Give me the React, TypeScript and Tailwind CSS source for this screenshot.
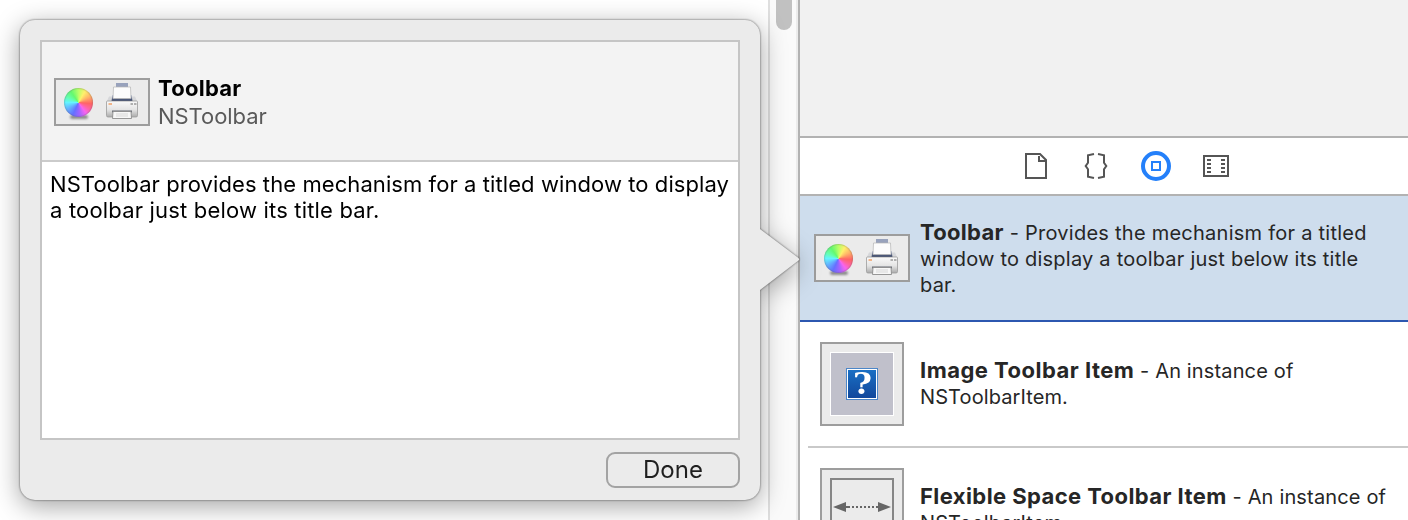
import type { ReactNode } from 'react';

function ColorWheel() {
  return (
    <div className="relative size-[30px] shrink-0">
      <div className="absolute inset-x-1.5 -bottom-px h-1 rounded-full bg-black/40 blur-[1.2px]" />
      <div className="absolute inset-x-[0.5px] top-0 bottom-px rounded-full bg-[conic-gradient(from_0deg,#b8ff68,#fff06c_30deg,#ffb868_60deg,#ff6464_95deg,#ff64a0_120deg,#f864f0_145deg,#a064ff_175deg,#6470ff_205deg,#64b4ff_240deg,#64f4ff_270deg,#64ffb0_295deg,#64f870_325deg,#b8ff68_360deg)] shadow-[inset_0_0_1px_1px_rgba(90,90,90,0.25)]" />
    </div>
  );
}

function Printer() {
  return (
    <svg className="h-[38px] w-[34px] shrink-0" viewBox="0 0 34 38">
      <defs>
        <linearGradient id="body" x1="0" y1="0" x2="0" y2="1">
          <stop offset="0" stopColor="#fafafa" />
          <stop offset="0.55" stopColor="#e4e4e4" />
          <stop offset="1" stopColor="#aaaaaa" />
        </linearGradient>
        <linearGradient id="slot" x1="0" y1="0" x2="0" y2="1">
          <stop offset="0" stopColor="#a8b2cc" />
          <stop offset="1" stopColor="#2c3856" />
        </linearGradient>
      </defs>
      <path d="M11 1h12v5H11z" fill="#98a2bc" />
      <path d="M4 14.500L1.500 20h31L30 14.500z" fill="#d6d7da" />
      <path d="M7.500 13h19l1 6h-21z" fill="url(#slot)" />
      <path d="M8.500 5h17l.5 11.500H8z" fill="#fcfcfc" stroke="#b4b4b4" strokeWidth="0.700" />
      <path d="M1.500 20q0-1 1-1H31.500q1 0 1 1V33.500q0 1.500-1.500 1.500H3q-1.500 0-1.500-1.500z" fill="url(#body)" stroke="#9c9c9c" strokeWidth="0.800" />
      <path d="M7 17.800h20" stroke="#4c5878" strokeWidth="1.600" />
      <path d="M3.500 22h3.500" stroke="#f0a068" strokeWidth="1.500" />
      <path d="M25.500 22h2.500m1 0h2.500" stroke="#999" strokeWidth="1.400" />
      <path d="M7 28.500h20v2H7z" fill="#6b6f78" />
      <path d="M8 29.500h18l.5 7h-19z" fill="#f7f7f7" stroke="#8c8c8c" strokeWidth="0.900" />
      <path d="M11 32h12M11 34h12" stroke="#cacaca" strokeWidth="0.700" />
    </svg>
  );
}

function ToolbarThumb() {
  return (
    <div className="flex h-12 w-24 shrink-0 border-2 border-[#9d9d9d] bg-[#ebebeb] pl-[7.5px]">
      <div className="pt-2">
        <ColorWheel />
      </div>
      <div className="ml-[11.5px] pt-[2px]">
        <Printer />
      </div>
    </div>
  );
}

function ImageItemThumb() {
  return (
    <div className="size-[84px] border-2 border-[#9d9d9d] bg-[#ebebeb] p-2">
      <div className="flex size-full items-center justify-center border border-white bg-[#c0c0cb]">
        <div className="size-8 border border-[#4c86c8]">
          <div className="flex size-full items-center justify-center border border-white bg-linear-to-b from-[#1a6fc4] to-[#12489c] font-['DejaVu_Serif',serif] text-[29px] leading-none font-bold text-white">
            <span className="scale-x-[1.12]">?</span>
          </div>
        </div>
      </div>
    </div>
  );
}

function FlexibleSpaceThumb() {
  return (
    <div className="size-[84px] border-2 border-[#9d9d9d] bg-[#ebebeb] p-2">
      <div className="size-full border-2 border-[#868686]">
        <svg className="h-[60px] w-[60px]" viewBox="0 0 60 60" fill="#666">
          <path d="M1 27l13-5v10zM59 27l-13-5v10z" />
          <path d="M14 27h4m2 0h2m2 0h2m2 0h2m2 0h2m2 0h2m2 0h2m2 0h4" stroke="#666" strokeWidth="2" />
        </svg>
      </div>
    </div>
  );
}

function LibraryTabs() {
  return (
    <div className="flex h-[60px] shrink-0 items-center gap-[30px] border-y-2 border-[#b2b2b2] bg-white pl-[221px]">
      <svg className="size-[30px]" viewBox="0 0 30 30" fill="none" stroke="#555" strokeWidth="2">
        <path d="M5 3h14l6 6v18H5z" />
        <path d="M18 5v5h6" />
      </svg>
      <svg className="size-[30px]" viewBox="0 0 30 30" fill="none" stroke="#555" strokeWidth="2">
        <path d="M13 3l-6 1.200v7.500L4.700 15 7 18.300V25.800l6 1.200" />
        <path d="M17 3l6 1.200v7.500L25.300 15 23 18.300V25.800l-6 1.200" />
      </svg>
      <svg className="size-[30px]" viewBox="0 0 30 30" fill="none" stroke="#2480fa">
        <circle cx="15" cy="15" r="13" strokeWidth="4" />
        <path d="M11 11h8v8h-8z" strokeWidth="2" />
      </svg>
      <svg className="size-[30px]" viewBox="0 0 30 30" fill="none" stroke="#555" strokeWidth="2">
        <path d="M3 5h24v20H3z" />
        <path d="M6 9h4M6 13h4M6 17h4M6 21h4M20 9h4M20 13h4M20 17h4M20 21h4" />
      </svg>
    </div>
  );
}

function LibraryRow({ thumb, children }: { thumb: ReactNode; children: ReactNode }) {
  return (
    <div className="flex h-[124px] items-center pl-[14px] text-[20px] leading-[26px] text-[#262626]">
      <div className="flex w-24 shrink-0 justify-center">{thumb}</div>
      <div className="pl-[10px] whitespace-nowrap">{children}</div>
    </div>
  );
}

function Popover() {
  return (
    <div className="absolute top-5 left-5 h-[480px] w-[780px] drop-shadow-[0_6px_13px_rgba(0,0,0,0.36)]">
      <div className="h-full w-full drop-shadow-[0_0_0.8px_rgba(0,0,0,0.6)]">
        <div className="flex h-[480px] w-[740px] flex-col rounded-[15px] bg-[#ebebeb] px-5 pt-5">
          <div className="flex h-[400px] flex-col border-2 border-[#c5c5c5] bg-white">
            <div className="flex h-[120px] items-center gap-2 border-b-2 border-[#cbcbcb] bg-[#f3f3f3] pt-0.5 pl-3">
              <ToolbarThumb />
              <div className="text-[22px] leading-7">
                <div className="font-bold tracking-[0.25px] text-black">Toolbar</div>
                <div className="tracking-[-0.05px] text-[#5a5a5a]">NSToolbar</div>
              </div>
            </div>
            <div className="pt-[9px] pl-2 text-[22px] leading-[26px] whitespace-nowrap text-black">
              <div className="tracking-[0.08px]">
                NSToolbar provides the mechanism for a titled window to display
              </div>
              <div className="tracking-[0.18px]">a toolbar just below its title bar.</div>
            </div>
          </div>
          <button className="mt-3 h-9 w-[134px] self-end rounded-[9px] border-2 border-[#a3a3a3] bg-[#ebebeb] pb-px text-[24px] leading-[31px] text-[#1f1f1f]">
            Done
          </button>
        </div>
        <svg className="absolute top-[209px] left-[739px] h-[61px] w-[41px]" viewBox="0 0 41 61">
          <path d="M0 0H1L39.500 29Q41 30.500 39.500 31.500L1 61H0z" fill="#ebebeb" />
        </svg>
      </div>
    </div>
  );
}

export default function App() {
  return (
    <div className="relative flex h-[520px] w-[1408px] overflow-hidden bg-white font-['Inter','Liberation_Sans',sans-serif]">
      <div className="flex w-[800px] shrink-0 justify-end border-r-2 border-[#b2b2b2]">
        <div className="flex w-[30px] border-r-2 border-l-2 border-r-[#ececec] border-l-[#dfdfdf] bg-[#fafafa] pl-1.5">
          <div className="h-[30px] w-4 rounded-b-full bg-[#c1c1c1]" />
        </div>
      </div>
      <div className="flex min-w-0 flex-1 flex-col">
        <div className="h-[136px] shrink-0 bg-[#f1f1f1]" />
        <LibraryTabs />
        <div className="shrink-0 border-b-2 border-[#2c57b0] bg-[#cedded]">
          <LibraryRow thumb={<ToolbarThumb />}>
            <div className="pt-0.5">
              <span className="text-[22px] leading-none font-bold tracking-[0.3px]">Toolbar</span>
              <span className="tracking-[0.25px]"> - Provides the mechanism for a titled</span>
            </div>
            <div className="tracking-[0.22px]">window to display a toolbar just below its title</div>
            <div className="tracking-[0.22px]">bar.</div>
          </LibraryRow>
        </div>
        <div className="shrink-0">
          <LibraryRow thumb={<ImageItemThumb />}>
            <div>
              <span className="text-[22px] leading-none font-bold tracking-[0.48px]">Image Toolbar Item</span>
              <span className="tracking-[0.14px]"> - An instance of</span>
            </div>
            <div className="tracking-[0.1px]">NSToolbarItem.</div>
          </LibraryRow>
        </div>
        <div className="ml-2 h-0.5 shrink-0 bg-[#c9c9c9]" />
        <div className="shrink-0">
          <LibraryRow thumb={<FlexibleSpaceThumb />}>
            <div>
              <span className="text-[22px] leading-none font-bold tracking-[0.42px]">Flexible Space Toolbar Item</span>
              <span className="tracking-[0.16px]"> - An instance of</span>
            </div>
            <div className="tracking-[0.1px]">NSToolbarItem.</div>
          </LibraryRow>
        </div>
      </div>
      <Popover />
    </div>
  );
}
